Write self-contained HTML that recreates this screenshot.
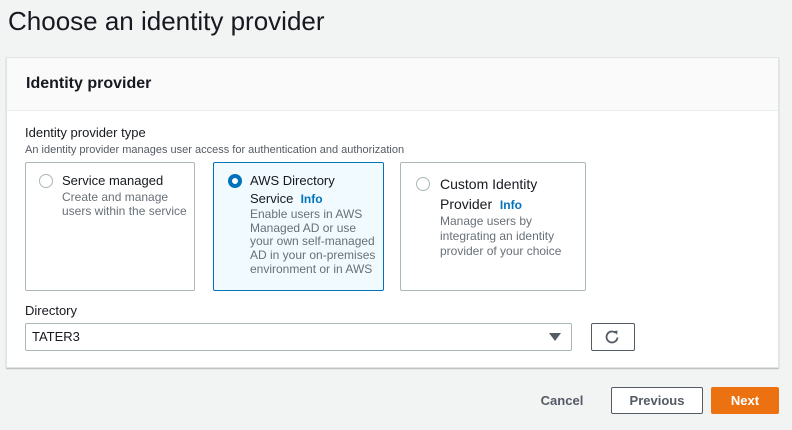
<!DOCTYPE html>
<html><head><style>
*{box-sizing:border-box;margin:0;padding:0}
body{width:792px;height:430px;background:#f2f3f3;font-family:"Liberation Sans",sans-serif;color:#16191f;position:relative;overflow:hidden}
.a{position:absolute}
h1{position:absolute;left:8px;top:6px;font-size:26px;font-weight:normal;color:#16191f}
.panel{left:6px;top:57px;width:773px;height:311px;background:#fff;border:1px solid #e0e3e3;box-shadow:0 1px 1px rgba(0,0,0,.25)}
.hdr{left:0;top:0;width:771px;height:53px;background:#fafafa;border-bottom:1px solid #eaeded}
.card{border:1px solid #aab7b8;background:#fff;border-radius:2px}
.card.sel{border-color:#0073bb;background:#f1faff}
.rad{width:14px;height:14px;border-radius:50%;border:1px solid #aab7b8;background:#fff}
.rad.on{border:4px solid #0073bb}
.t{font-size:14px;line-height:18px}
.d{font-size:12px;line-height:14px;color:#687078}
.info{color:#0073bb;font-weight:bold;font-size:12px}
.btn{font-size:13px;font-weight:bold;text-align:center;line-height:25px}
</style></head><body>
<h1>Choose an identity provider</h1>
<div class="a panel">
 <div class="a hdr"><div class="a" style="left:19px;top:17px;font-size:16px;font-weight:bold">Identity provider</div></div>
</div>
<div class="a" style="left:25px;top:125px;font-size:13px">Identity provider type</div>
<div class="a d" style="left:25px;top:143px;font-size:11px;color:#545b64">An identity provider manages user access for authentication and authorization</div>
<div class="a card" style="left:25px;top:162px;width:170px;height:129px"></div>
<div class="a rad" style="left:39px;top:174px"></div>
<div class="a t" style="left:62px;top:172px;font-size:13px">Service managed</div>
<div class="a d" style="left:62px;top:190px">Create and manage<br>users within the service</div>
<div class="a card sel" style="left:213px;top:162px;width:171px;height:129px"></div>
<div class="a rad on" style="left:228px;top:174px"></div>
<div class="a t" style="left:250px;top:172px;font-size:13px;line-height:18px">AWS Directory<br>Service &nbsp;<span class="info">Info</span></div>
<div class="a d" style="left:250px;top:208px;line-height:13.7px">Enable users in AWS<br>Managed AD or use<br>your own self-managed<br>AD in your on-premises<br>environment or in AWS</div>
<div class="a card" style="left:400px;top:162px;width:186px;height:129px"></div>
<div class="a rad" style="left:416px;top:177px"></div>
<div class="a t" style="left:440px;top:174px;line-height:20px">Custom Identity<br>Provider &nbsp;<span class="info">Info</span></div>
<div class="a d" style="left:440px;top:214px;line-height:15px">Manage users by<br>integrating an identity<br>provider of your choice</div>
<div class="a" style="left:25px;top:303px;font-size:13px">Directory</div>
<div class="a" style="left:25px;top:323px;width:547px;height:28px;border:1px solid #aab7b8;border-radius:2px;background:#fff;font-size:13px;line-height:26px;padding-left:6px">TATER3</div>
<div class="a" style="left:549px;top:333px;width:0;height:0;border-left:6px solid transparent;border-right:6px solid transparent;border-top:8px solid #545b64"></div>
<div class="a" style="left:591px;top:323px;width:44px;height:28px;border:1px solid #545b64;border-radius:2px;background:#fff"></div>
<svg class="a" style="left:603px;top:328px" width="18" height="18" viewBox="0 0 18 18"><path d="M14.5 9.5A5.5 5.5 0 1 1 12.6 4.8" fill="none" stroke="#545b64" stroke-width="1.8"/><path d="M10.5 3.2L14.5 2.5L14.2 6.8Z" fill="#545b64"/></svg>
<div class="a btn" style="left:536px;top:388px;width:52px;color:#545b64">Cancel</div>
<div class="a btn" style="left:611px;top:387px;width:92px;height:27px;border:1px solid #545b64;border-radius:2px;background:#fff;color:#545b64">Previous</div>
<div class="a btn" style="left:711px;top:387px;width:68px;height:27px;background:#ec7211;border:1px solid #ec7211;border-radius:2px;color:#fff">Next</div>
</body></html>
